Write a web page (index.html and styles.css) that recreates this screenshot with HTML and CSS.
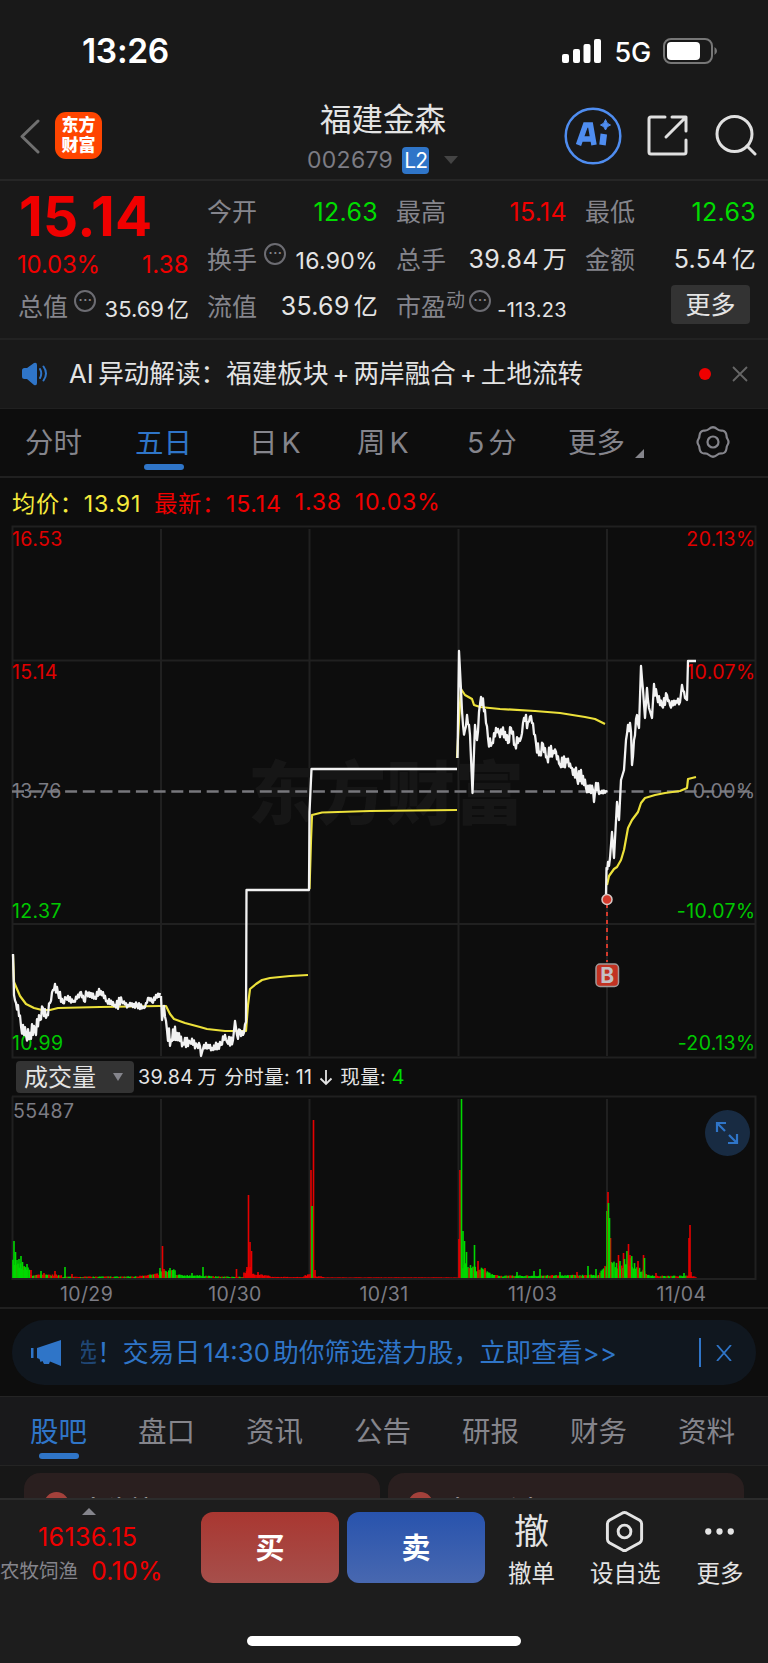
FILE: index.html
```html
<!DOCTYPE html>
<html lang="zh-CN">
  <head>
    <meta charset="UTF-8" />
    <title>福建金森 002679</title>
    <link rel="stylesheet" href="styles.css">
  </head>
  <body>
    <div class="status-bar">
      <span class="time">13:26</span>
      <svg class="signal" width="39" height="25" viewBox="0 0 39 25">
        <rect x="0" y="15" width="7" height="9" rx="2" />
        <rect x="11" y="10" width="7" height="14" rx="2" />
        <rect x="21.500" y="5" width="7" height="19" rx="2" />
        <rect x="32" y="0" width="7" height="24" rx="2" />
      </svg>
      <span class="network">5G</span>
      <svg class="battery" width="55" height="26" viewBox="0 0 55 26">
        <rect x="1" y="1" width="48" height="24" rx="7" fill="none" stroke="#777" stroke-width="2" />
        <rect x="4" y="4" width="33" height="18" rx="4" fill="#fff" />
        <path d="M51.500 9q2.500 1.500 2.500 4t-2.500 4z" fill="#777" />
      </svg>
    </div>

    <div class="header">
      <svg class="back" width="21" height="36" viewBox="0 0 21 36">
        <path d="M19 2L3 17.500L19 33" />
      </svg>
      <div class="logo"><span>东方</span><span>财富</span></div>
      <div class="title">
        <h1>福建金森</h1>
        <div class="code">002679 <b>L2</b><i class="caret"></i></div>
      </div>
      <div class="ai">
        <svg width="58" height="58" viewBox="0 0 58 58">
          <circle cx="29" cy="29" r="27.300" fill="none" stroke="#4f8df0" stroke-width="2.500" />
          <path d="M14.500 38L21.500 18H26.500L30 38M18 32H28" fill="none" stroke="#4f8df0" stroke-width="5.500" />
          <path d="M39.800 27L38.500 38" stroke="#4f8df0" stroke-width="6.500" />
          <path d="M41.500 12.500Q42.500 17 46.500 18Q42.500 19 41.500 23Q40.500 19 36.500 18Q40.500 17 41.500 12.500Z" fill="#4f8df0" stroke="#4f8df0" stroke-width="1" />
        </svg>
      </div>
      <svg class="share" width="42" height="42" viewBox="0 0 42 42">
        <path d="M18 2H4Q2 2 2 4V37Q2 39 4 39H37Q39 39 39 37V25" />
        <path d="M25 2H39V16M38 3L19 22" />
      </svg>
      <svg class="search" width="42" height="42" viewBox="0 0 42 42">
        <circle cx="19.500" cy="20" r="17.500" />
        <path d="M32 32L40 40" />
      </svg>
    </div>

    <div class="quote">
      <div class="cell price">15.14</div>
      <div class="cell"><label>今开</label><span class="green">12.63</span></div>
      <div class="cell"><label>最高</label><span class="red">15.14</span></div>
      <div class="cell"><label>最低</label><span class="green">12.63</span></div>

      <div class="cell change red"><span>10.03%</span><span>1.38</span></div>
      <div class="cell"><label>换手</label><i class="more-dot">···</i><span class="mid">16.90%</span></div>
      <div class="cell"><label>总手</label><span>39.84<em>万</em></span></div>
      <div class="cell"><label>金额</label><span>5.54<em>亿</em></span></div>

      <div class="cell"><label>总值</label><i class="more-dot">···</i><span class="small">35.69<em>亿</em></span></div>
      <div class="cell"><label>流值</label><span>35.69<em>亿</em></span></div>
      <div class="cell"><label>市盈<sup>动</sup></label><i class="more-dot">···</i><span class="tiny">-113.23</span></div>
      <div class="cell"><button class="more-btn">更多</button></div>
    </div>

    <div class="alert">
      <svg width="26" height="24" viewBox="0 0 26 24">
        <path d="M0 8.500Q0 6 2.500 6H5L12 1Q15 0 15 3V21Q15 24 12 23L5 17H2.500Q0 17 0 14.500Z" fill="#2f75c8" />
        <path d="M18 7Q20.500 11.500 18 16M21.500 4.500Q26.500 11.500 21.500 18.500" fill="none" stroke="#2f75c8" stroke-width="2" stroke-linecap="round" />
      </svg>
      <p>AI&thinsp;异动解读：福建板块<u>+</u>两岸融合<u>+</u>土地流转</p>
      <i class="red-dot"></i>
      <svg class="close" width="16" height="16" viewBox="0 0 16 16"><path d="M1 1L15 15M15 1L1 15" /></svg>
    </div>

    <div class="period-tabs">
      <a>分时</a>
      <a class="active">五日</a>
      <a>日<u>K</u></a>
      <a>周<u>K</u></a>
      <a>5<u>分</u></a>
      <a class="more">更多</a>
      <svg width="34" height="34" viewBox="0 0 34 34">
        <path d="M13 4Q17 .5 21 4Q23 5.800 26 5.500Q30 6 30.500 10.500Q30.500 12.500 31.500 14Q33.500 17 31.500 20Q30.500 21.500 30.500 23.500Q30 28 26 28.500Q23 28.200 21 30Q17 33.500 13 30Q11 28.200 8 28.500Q4 28 3.500 23.500Q3.500 21.500 2.500 20Q.5 17 2.500 14Q3.500 12.500 3.500 10.500Q4 6 8 5.500Q11 5.800 13 4Z" />
        <circle cx="17" cy="17" r="5.500" />
      </svg>
    </div>

    <div class="legend">
      <span class="yellow">均价：13.91</span>
      <span class="red">最新：15.14</span>
      <span class="red">1.38</span>
      <span class="red">10.03%</span>
    </div>

    <svg class="price-chart" width="768" height="534" viewBox="0 525 768 534">
      <g class="grid">
        <rect x="12.500" y="526.500" width="743" height="531" />
        <path d="M161 529V1056M309.500 529V1056M458.500 529V1056M607 529V1056M12 660.500H755M12 924H755" />
      </g>
      <text class="watermark" x="248" y="819">东方财富</text>
      <path class="zero" d="M12 791.500H755" />
      <g class="axis">
        <text class="up" x="12" y="546">16.53</text>
        <text class="up" x="12" y="678.500">15.14</text>
        <text x="12" y="798">13.76</text>
        <text class="down" x="12" y="918">12.37</text>
        <text class="down" x="12" y="1050">10.99</text>
        <g text-anchor="end">
          <text class="up" x="755.500" y="546">20.13%</text>
          <text class="up" x="755.500" y="678.500">10.07%</text>
          <text x="755.500" y="798">0.00%</text>
          <text class="down" x="755.500" y="918">-10.07%</text>
          <text class="down" x="755.500" y="1050">-20.13%</text>
        </g>
      </g>
      <g id="avgLines"></g>
      <g id="priceLines"></g>
      <g class="buy-point">
        <path d="M607 904V962" />
        <circle cx="607" cy="899.500" r="5" />
        <rect x="596" y="964" width="22.500" height="22.500" rx="4" />
        <text x="607.300" y="983" text-anchor="middle">B</text>
      </g>
    </svg>

    <div class="volume-bar">
      <button>成交量<i class="caret"></i></button>
      <span>39.84<u>万</u></span>
      <span>分时量: 11</span>
      <svg width="14" height="18" viewBox="0 0 14 18"><path d="M7 2V16M1.500 10.500L7 16L12.500 10.500" /></svg>
      <span>现量: <b>4</b></span>
    </div>

    <div class="volume">
      <svg class="volume-chart" width="768" height="212" viewBox="0 1095 768 212">
        <g class="grid">
          <path d="M12 1096.500H755.500V1279H12.500V1096.500M161 1099V1278M309.500 1099V1278M458.500 1099V1278M607 1099V1278" />
        </g>
        <g id="volBars"></g>
        <g class="axis">
          <text x="13" y="1118">55487</text>
          <g text-anchor="middle">
            <text x="86.500" y="1301">10/29</text>
            <text x="235" y="1301">10/30</text>
            <text x="384" y="1301">10/31</text>
            <text x="532.500" y="1301">11/03</text>
            <text x="681.500" y="1301">11/04</text>
          </g>
        </g>
      </svg>
      <button class="expand">
        <svg width="24" height="24" viewBox="0 0 24 24">
          <path d="M11 2H2V11M2 2L10 10M22 13V22H13M22 22L14 14" />
        </svg>
      </button>
    </div>

    <div class="promo-wrap">
      <div class="promo">
        <svg width="31" height="26" viewBox="0 0 31 26">
          <path d="M0 8H2.500V18H0ZM6 8L30 0V26L19 21.500L18 24H13L11.500 21L9.500 22L8.500 19L6 18Z" fill="#2f75c8" />
        </svg>
        <p><span class="faded">选</span>！交易日<u>14:30</u>助你筛选潜力股，立即查看&gt;&gt;</p>
        <i class="divider"></i>
        <svg class="close" width="16" height="16" viewBox="0 0 16 16"><path d="M1 0L15 16M15 0L1 16" /></svg>
      </div>
    </div>

    <div class="info-tabs">
      <a class="active">股吧</a>
      <a>盘口</a>
      <a>资讯</a>
      <a>公告</a>
      <a>研报</a>
      <a>财务</a>
      <a>资料</a>
    </div>

    <div class="cards">
      <div class="card"><i></i>大佬榜</div>
      <div class="card"><i></i>牛人看点</div>
    </div>

    <div class="bottom">
      <div class="index">
        <i class="caret-up"></i>
        <div class="red">16136.15</div>
        <div class="sector"><small>农牧饲渔</small><span class="red">0.10%</span></div>
      </div>
      <button class="trade buy">买</button>
      <button class="trade sell">卖</button>
      <div class="action cancel"><b>撤</b><span>撤单</span></div>
      <div class="action fav">
        <svg width="42" height="44" viewBox="0 0 42 44">
          <path d="M18.500 3Q20.500 2 22.500 3L36 10.500Q38 12 38 14V30Q38 32 36 33.500L22.500 41Q20.500 42 18.500 41L5 33.500Q3 32 3 30V14Q3 12 5 10.500Z" />
          <circle cx="20.500" cy="22" r="6.500" />
        </svg>
        <span>设自选</span>
      </div>
      <div class="action dots">
        <svg width="32" height="44" viewBox="0 0 32 44"><circle cx="4" cy="22" r="3.200" /><circle cx="15.500" cy="22" r="3.200" /><circle cx="27" cy="22" r="3.200" /></svg>
        <span>更多</span>
      </div>
      <div class="home-indicator"></div>
    </div>

    <script src="chart.js"></script>
  </body>
</html>
```
FILE: styles.css
```css
* {
  box-sizing: border-box;
}

body {
  margin: 0;
  width: 768px;
  height: 1663px;
  overflow: hidden;
  background-color: #0d0d0d;
  color: #e4e4e4;
  font-family: Inter, "Noto Sans CJK SC", sans-serif;
  font-size: 25px;
}

svg {
  display: block;
  flex: none;
}

button {
  border: none;
  padding: 0;
  font-family: inherit;
  color: inherit;
}

i,
em {
  font-style: normal;
}

u {
  text-decoration: none;
}

.red {
  color: #f00000;
}

.green {
  color: #00dc00;
}

.yellow {
  color: #f5ea3c;
}

/* status bar */
.status-bar {
  height: 102px;
  display: flex;
  align-items: center;
  padding: 0 50px 0 82px;
  background-color: #191919;
  color: #fff;
}

.time {
  flex: 1;
  font-size: 33.5px;
  font-weight: 600;
  letter-spacing: -0.3px;
}

.signal {
  fill: #fff;
}

.network {
  margin: 2px 12px 0 14px;
  font-size: 27px;
  font-weight: 500;
  letter-spacing: -0.2px;
}

/* header */
.header {
  height: 79px;
  display: flex;
  align-items: flex-start;
  padding-left: 19px;
  background-color: #191919;
  border-bottom: 2px solid #262626;
}

.header .back,
.header .share,
.header .search {
  fill: none;
  stroke: #e0e0e0;
  stroke-width: 3;
  stroke-linecap: round;
  stroke-linejoin: round;
}

.header .back {
  margin-top: 17px;
  stroke: #707070;
}

.logo {
  width: 47px;
  height: 47px;
  margin: 10px 0 0 15px;
  padding-top: 3px;
  border-radius: 11px;
  background-color: #ff4500;
  color: #fff;
  font-size: 17px;
  font-weight: 900;
  line-height: 20px;
  text-align: center;
}

.logo span {
  display: block;
}

.title {
  width: 462px;
  padding-left: 100px;
  text-align: center;
}

.title h1 {
  margin: -5px 0 0;
  width: 362px;
  font-size: 31.5px;
  font-weight: 400;
  line-height: 45px;
}

.code {
  display: flex;
  align-items: center;
  padding-left: 105px;
  margin-top: 4px;
  height: 28px;
  font-size: 23px;
  letter-spacing: 0.3px;
  color: #7c7c84;
}

.code b {
  width: 27px;
  height: 27px;
  margin-left: 9px;
  border-radius: 4px;
  background-color: #2f75c8;
  color: #fff;
  font-size: 21px;
  font-weight: 400;
  line-height: 28px;
  letter-spacing: -1px;
}

.caret {
  width: 0;
  height: 0;
  margin-left: 15px;
  border: 7px solid transparent;
  border-top: 8px solid #444;
  border-bottom: none;
}

.ai {
  margin-top: 5px;
}

.share {
  margin: 13px 0 0 25px;
}

.search {
  margin: 12px 0 0 26px;
}

/* quote */
.quote {
  height: 159px;
  display: grid;
  grid-template-columns: 169px 169px 169px 169px;
  grid-template-rows: 48px 47px 47px;
  column-gap: 20px;
  padding: 7px 0 0 19px;
  background-color: #191919;
  border-bottom: 2px solid #222;
}

.cell {
  display: flex;
  align-items: center;
  justify-content: space-between;
  white-space: nowrap;
  line-height: 36px;
}

.cell span {
  margin-right: -1px;
  letter-spacing: 0.3px;
}

.cell label {
  margin-left: -1px;
  color: #85858c;
}

.cell em {
  margin-left: 4px;
  font-size: 24px;
}

.price {
  padding-top: 7px;
  color: #f00000;
  font-size: 55px;
  font-weight: 700;
  letter-spacing: 0.3px;
}

.change {
  padding-top: 11px;
  font-size: 24px;
}

.change span:first-child {
  margin-left: -2px;
  letter-spacing: -0.2px;
}

.cell .mid {
  font-size: 23px;
  padding-top: 3px;
}

.cell .small {
  font-size: 22px;
  padding-top: 4px;
  letter-spacing: 0;
}

.cell .small em {
  margin-left: 3px;
  font-size: 22px;
}

.cell .tiny {
  font-size: 20px;
  padding-top: 6px;
}

.more-dot {
  width: 22px;
  height: 22px;
  margin: -12px 0 0 -2px;
  border: 2px solid #6c6c72;
  border-radius: 50%;
  color: #85858c;
  font-size: 16px;
  line-height: 17px;
  text-align: center;
}

.cell sup {
  font-size: 19px;
  line-height: 0;
}

.more-btn {
  width: 79px;
  height: 39px;
  margin-left: 85px;
  margin-top: -4px;
  padding-bottom: 3px;
  border-radius: 4px;
  background-color: #333;
  font-size: 25px;
}

/* alert */
.alert {
  height: 69px;
  display: flex;
  align-items: center;
  padding: 0 20px 0 22px;
  background-color: #191919;
  border-bottom: 1px solid #202020;
}

.alert p {
  flex: 1;
  margin: -5px 0 0 21px;
  font-size: 25.6px;
  white-space: nowrap;
}

.alert u {
  margin: 0 4px;
}

.red-dot {
  width: 12px;
  height: 12px;
  margin-right: 21px;
  border-radius: 50%;
  background-color: #f00000;
}

.close {
  fill: none;
  stroke: #666;
  stroke-width: 1.8;
}

/* period tabs */
.period-tabs {
  height: 69px;
  display: grid;
  grid-template-columns: 110px 114px 108px 110px 101px 128px 34px;
  align-items: center;
  padding: 0 0 4px 25px;
  border-bottom: 2px solid #202020;
  color: #85858c;
  font-size: 28.5px;
}

.period-tabs a,
.info-tabs a {
  position: relative;
  justify-self: start;
}

.period-tabs u {
  margin-left: 4px;
}

.period-tabs .active,
.info-tabs .active {
  color: #2f75c8;
}

.active::after {
  content: "";
  position: absolute;
  left: 9px;
  bottom: -9px;
  width: 40px;
  height: 6px;
  border-radius: 3px;
  background-color: #2f75c8;
}

.period-tabs .more {
  padding-right: 19px;
}

.period-tabs .more::after {
  content: "";
  position: absolute;
  right: 0;
  bottom: 3px;
  border-left: 9px solid transparent;
  border-bottom: 9px solid #85858c;
}

.period-tabs svg {
  margin-top: 2px;
  fill: none;
  stroke: #85858c;
  stroke-width: 2.2;
}

/* legend */
.legend {
  height: 47px;
  display: flex;
  align-items: center;
  gap: 13px;
  padding-left: 12px;
  font-size: 23.2px;
  letter-spacing: 0.75px;
}

/* charts */
.grid {
  fill: none;
  stroke: #202020;
  stroke-width: 2;
}

.zero {
  stroke: #77777c;
  stroke-width: 2.4;
  stroke-dasharray: 12 5.7;
}

.watermark {
  fill: #161616;
  font-size: 69px;
  font-weight: 900;
}

.axis {
  fill: #7c7c84;
  font-size: 19.5px;
  letter-spacing: 0.4px;
}

.up {
  fill: #e00000;
}

.down {
  fill: #00c800;
}

.avg {
  fill: none;
  stroke: #ece13a;
  stroke-width: 2.2;
  stroke-linejoin: round;
}

.line {
  fill: none;
  stroke: #f2f2f2;
  stroke-width: 2.3;
  stroke-linejoin: round;
}

.buy-point path {
  stroke: #d23a2c;
  stroke-width: 2;
  stroke-dasharray: 4 4;
}

.buy-point circle {
  fill: #d23a2c;
  stroke: #d8c8c4;
  stroke-width: 1.5;
}

.buy-point rect {
  fill: #c23222;
  stroke: #a09a9a;
  stroke-width: 1.5;
}

.buy-point text {
  fill: #c4c0c4;
  font-size: 21px;
  font-weight: 700;
}

/* volume */
.volume-bar {
  height: 36px;
  display: flex;
  align-items: center;
  padding: 0 0 1px 16px;
  font-size: 19.7px;
  letter-spacing: 0.25px;
  white-space: nowrap;
}

.volume-bar button {
  width: 118px;
  height: 32px;
  display: flex;
  align-items: center;
  margin-right: 4px;
  padding: 0 0 3px 8px;
  border-radius: 4px;
  background-color: #333;
  font-size: 24px;
}

.volume-bar .caret {
  margin: 3px 0 0 17px;
  border-width: 8px 5px 0;
  border-top-color: #85858c;
}

.volume-bar span {
  margin: -2px 7px 0 0;
}

.volume-bar u {
  margin-left: 4px;
}

.volume-bar svg {
  margin-right: 7px;
  fill: none;
  stroke: #e4e4e4;
  stroke-width: 1.8;
}

.volume-bar b {
  color: #00dc00;
  font-weight: 400;
}

.volume {
  position: relative;
}

.expand {
  position: absolute;
  left: 705px;
  top: 15px;
  width: 45px;
  height: 46px;
  display: flex;
  align-items: center;
  justify-content: center;
  border-radius: 50%;
  background-color: #182b42;
}

.expand svg {
  margin-left: -1px;
  fill: none;
  stroke: #2f75c8;
  stroke-width: 2.2;
}

/* promo */
.promo-wrap {
  height: 89px;
  padding: 11px 12px 0 12px;
  border-top: 2px solid #202020;
}

.promo {
  height: 65px;
  display: flex;
  align-items: center;
  padding: 0 24px 0 19px;
  border-radius: 33px;
  background-color: #10171f;
  color: #2f75c8;
}

.promo p {
  flex: 1;
  margin: -4px 0 0 19px;
  font-size: 25.8px;
  white-space: nowrap;
}

.promo .faded {
  display: inline-block;
  width: 16px;
  direction: rtl;
  overflow: hidden;
  vertical-align: bottom;
  opacity: 0.5;
}

.promo u {
  margin: 0 3px;
}

.divider {
  width: 2px;
  height: 29px;
  margin-right: 15px;
  background-color: #2f75c8;
}

.promo .close {
  stroke: #2f75c8;
}

/* info tabs */
.info-tabs {
  height: 70px;
  display: flex;
  align-items: center;
  gap: 51px;
  padding: 0 0 3px 30px;
  background-color: #19191b;
  border-top: 1px solid #242424;
  border-bottom: 1px solid #242424;
  color: #85858c;
  font-size: 28.5px;
}

.info-tabs a {
  flex: none;
}

/* cards */
.cards {
  height: 32px;
  display: flex;
  gap: 8px;
  padding: 7px 24px 0;
  background-color: #171717;
  overflow: hidden;
}

.card {
  flex: 1;
  height: 110px;
  display: flex;
  align-items: flex-start;
  padding: 19px 20px;
  border-radius: 16px;
  background-color: #2a1f1f;
  font-size: 24.5px;
  font-weight: 500;
  line-height: 36px;
}

.card i {
  width: 25px;
  height: 25px;
  margin: 0 12px 0 0;
  border-radius: 50%;
  background-color: #a3413b;
}

/* bottom bar */
.bottom {
  position: relative;
  height: 165px;
  display: flex;
  align-items: flex-start;
  padding-top: 12px;
  background-color: #1d1d1d;
  border-top: 2px solid #2c2c2c;
  white-space: nowrap;
}

.index {
  width: 201px;
}

.index > .red {
  padding-left: 38px;
  margin-top: 4px;
  font-size: 25.2px;
  line-height: 36px;
  letter-spacing: 0.3px;
}

.caret-up {
  display: block;
  width: 14px;
  margin: -4px 0 0 82px;
  border: 7px solid transparent;
  border-bottom: 7px solid #85858c;
  border-top: none;
}

.sector {
  display: flex;
  align-items: center;
  font-size: 25px;
  line-height: 33px;
  letter-spacing: 0.2px;
}

.sector small {
  width: 91px;
  color: #85858c;
  font-size: 19.5px;
  letter-spacing: 0;
}

.trade {
  width: 138px;
  height: 71px;
  margin-right: 8px;
  padding-bottom: 4px;
  border-radius: 12px;
  color: #fff;
  font-size: 29px;
  font-weight: 700;
}

.buy {
  background: linear-gradient(#a93731, #a64f4b);
}

.sell {
  background: linear-gradient(#2853ad, #4868b0);
}

.action {
  display: flex;
  flex-direction: column;
  align-items: center;
  font-size: 23.5px;
}

.action b {
  height: 43px;
  margin-top: -2px;
  font-size: 35px;
  font-weight: 400;
  line-height: 42px;
}

.action span {
  line-height: 42px;
}

.action svg {
  margin-top: -2px;
  height: 43px;
  fill: none;
  stroke: #e4e4e4;
  stroke-width: 3;
}

.cancel {
  margin-left: 15px;
}

.fav {
  margin-left: 35px;
}

.dots {
  margin-left: 36px;
}

.dots svg {
  fill: #e4e4e4;
  stroke: none;
}

.home-indicator {
  position: absolute;
  left: 247px;
  bottom: 17px;
  width: 274px;
  height: 10px;
  border-radius: 5px;
  background-color: #fff;
}
```
FILE: chart.js
```js
var NS = "http://www.w3.org/2000/svg";

// [x, y, jitter] - jitter is how noisy the line is on the way to the point
var prices = [
  [[13,954],[14,995],[16,1003,4],[18,1005,4],[21,1026,6],[26,1035,5],[30,1033,5],[35,1030,6],[40,1020,6],[43,1008,4],[47,1015,5],[50,1003,3],[53,990,2],[55,984,2],[58,993,4],[63,1003,4],[66,998,3],[74,1001,2],[81,992,2],[84,1001,3],[87,993,3],[95,997,3],[101,991,3],[107,1001,2],[115,1005,2],[122,1002,4],[128,1005,2],[137,1005,2],[144,1008,2],[149,998,2],[152,1002,2],[160,993,2]],
  [[161,996],[162,1020],[164,1006,3],[167,1030,3],[171,1040,6],[177,1033,6],[183,1043,5],[190,1042,4],[197,1045,3],[200,1046,2],[201,1056],[204,1045],[212,1048,2],[221,1045,3],[225,1035,3],[227,1042,2],[233,1040,3],[235,1021],[237,1035],[240,1030,4],[243,1035,4],[246,1022,2],[246.5,890],[309,890],[309.5,812],[311.5,769],[457,769]],
  [[457.5,758],[459,651],[461,690],[463,725,3],[465,730,5],[467,715,4],[470,735,4],[472.5,793],[475,725],[477,740,4],[479,712,5],[481,697],[485,710,5],[488,738,3],[492,743,6],[496,728,4],[499,733,4],[505,732,4],[508,743,3],[511,728,4],[515,745,4],[521,738,4],[524,718,4],[528,722,5],[531,716,3],[536,743,3],[540,752,5],[543,744,5],[547,757,6],[553,751,5],[556,752,4],[560,765,4],[566,759,5],[572,768,4],[577,778,6],[583,776,5],[586,788,4],[593,790,4],[594,802],[596,783],[600,792,4],[607,792,1]],
  [[606,895],[606.5,868],[608,862,3],[610,858,4],[612,832],[614,858],[617,802],[619,820,2],[621,780],[624,770],[626,740],[628,725,3],[631,732,5],[632,765],[634,740,3],[637,715,3],[639,728,2],[641,666],[643,690,2],[645,718],[647,688],[649,708,4],[652,718],[654,684],[657,696,6],[662,706,3],[667,695,4],[670,705,2],[676,701,3],[680,702,2],[682,685],[685,698,2],[687,700],[688,661],[696,661]]
];

var averages = [
  [[13,955],[14,982],[20,996],[26,1004],[34,1008],[42,1010],[50,1010],[58,1008],[100,1007],[160,1006],[166,1006],[170,1014],[174,1019],[185,1023],[200,1027],[207,1029],[225,1031],[246,1031],[248,1005],[250,989],[256,984],[262,980],[270,978],[290,976],[308,975]],
  [[309.5,889],[311,840],[312,815],[322,812.5],[370,811],[457,810]],
  [[457,758],[459,720],[461,689],[465,695],[472,699],[474,705],[480,707],[500,709],[535,711],[560,713],[585,717],[595,719],[605,724]],
  [[607,885],[609,876],[614,869],[617,867],[621,860],[624,850],[628,828],[632,820],[638,812],[641,803],[645,798],[655,795],[665,793],[680,791],[687,788],[688,779],[696,777]]
];

// [x, height, colour]
var peaks = [
  [14,37,"g"],[15.5,26,"g"],[17,18,"g"],[19,19,"g"],[21,22,"g"],[22.5,16,"g"],[24,8,"g"],[27,14,"g"],[31,8,"r"],[41,7,"g"],[44,5,"r"],[55,7,"r"],[65,11,"g"],[72,4,"r"],
  [160,10,"g"],[162.5,32,"r"],[164,9,"r"],[170,10,"g"],[203,11,"g"],[192,5,"g"],[236.5,9,"r"],[248.5,83,"r"],[250,36,"r"],[251.5,27,"r"],[247,11,"r"],[258,6,"r"],
  [311,108,"r"],[313.5,158,"r"],[312,72,"g"],[315,8,"r"],
  [459,39,"r"],[460,108,"r"],[461.5,179,"g"],[463,47,"g"],[464.5,37,"g"],[466.5,26,"g"],[474.5,33,"g"],[478,17,"r"],[485,10,"r"],[517,6,"g"],[534,7,"g"],[540,9,"g"],[560,6,"g"],[577,6,"r"],[588,12,"g"],[596,9,"g"],
  [607,67,"g"],[608,86,"r"],[608.5,75,"g"],[610.5,40,"r"],[609.5,60,"g"],[618.5,23,"r"],[620,17,"g"],[623.5,25,"r"],[624.5,19,"g"],[627,27,"g"],[628.5,34,"r"],[630,23,"r"],[638,17,"r"],[643.5,23,"r"],[644.5,20,"g"],[656,5,"r"],[684,5,"g"],[689,40,"r"],[690,53,"r"],[691,6,"r"]
];

// [from, to, start height, end height, share of red bars]
var ranges = [
  [13,30,16,8,0.08],[30,62,3,3,0.45],[62,140,1.2,1.5,0.5],[140,160,2.5,4,0.7],[160,176,6,8,0.15],[176,212,3,2,0.2],[212,244,1.5,1,0.4],[244,251,6,10,1],[251,270,5,2,1],[270,304,1,1,1],[304,312,2,5,1],[315,325,2,1,1],[325,458,0.6,0.6,1],
  [463,474,13,11,0.05],[474,486,10,8,0.35],[486,500,6,2,0.1],[500,600,2,3,0.3],[600,608,5,14,0.3],[609,618,17,12,0.15],[618,632,11,19,0.3],[632,645,14,6,0.15],[645,656,4,2,0.2],[656,690,2,2,0.5],[690,697,3,0.5,1]
];

var seed = 7;
function rand() {
  seed = (seed * 16807) % 2147483647;
  return seed / 2147483647;
}

function add(parent, tag, attrs) {
  var el = document.createElementNS(NS, tag);
  for (var key in attrs) el.setAttribute(key, attrs[key]);
  document.getElementById(parent).appendChild(el);
}

function linePath(points) {
  var d = "M" + points[0][0] + " " + points[0][1];
  for (var i = 1; i < points.length; i++) {
    var a = points[i - 1];
    var b = points[i];
    if (b[2]) {
      var steps = Math.max(2, Math.round(b[0] - a[0]));
      for (var s = 1; s < steps; s++) {
        var t = s / steps;
        var side = s % 2 ? 1 : -1;
        var y = a[1] + (b[1] - a[1]) * t + side * (0.3 + rand()) * b[2] * 1.15;
        d += "L" + (a[0] + (b[0] - a[0]) * t).toFixed(1) + " " + y.toFixed(1);
      }
    }
    d += "L" + b[0] + " " + b[1];
  }
  return d;
}

function bar(x, h, color) {
  add("volBars", "rect", {
    x: x - 0.8,
    y: 1278 - h,
    width: 1.6,
    height: h,
    fill: color === "r" ? "#e60000" : "#00d800"
  });
}

averages.forEach(function (p) {
  add("avgLines", "path", { class: "avg", d: linePath(p) });
});

prices.forEach(function (p) {
  add("priceLines", "path", { class: "line", d: linePath(p) });
});

ranges.forEach(function (r) {
  for (var x = r[0]; x < r[1]; x += 1.25) {
    var t = (x - r[0]) / (r[1] - r[0]);
    var h = (r[2] + (r[3] - r[2]) * t) * (0.7 + rand() * 0.5);
    bar(x, h, rand() < r[4] ? "r" : "g");
  }
});

peaks.forEach(function (p) {
  bar(p[0], p[1], p[2]);
});
```
